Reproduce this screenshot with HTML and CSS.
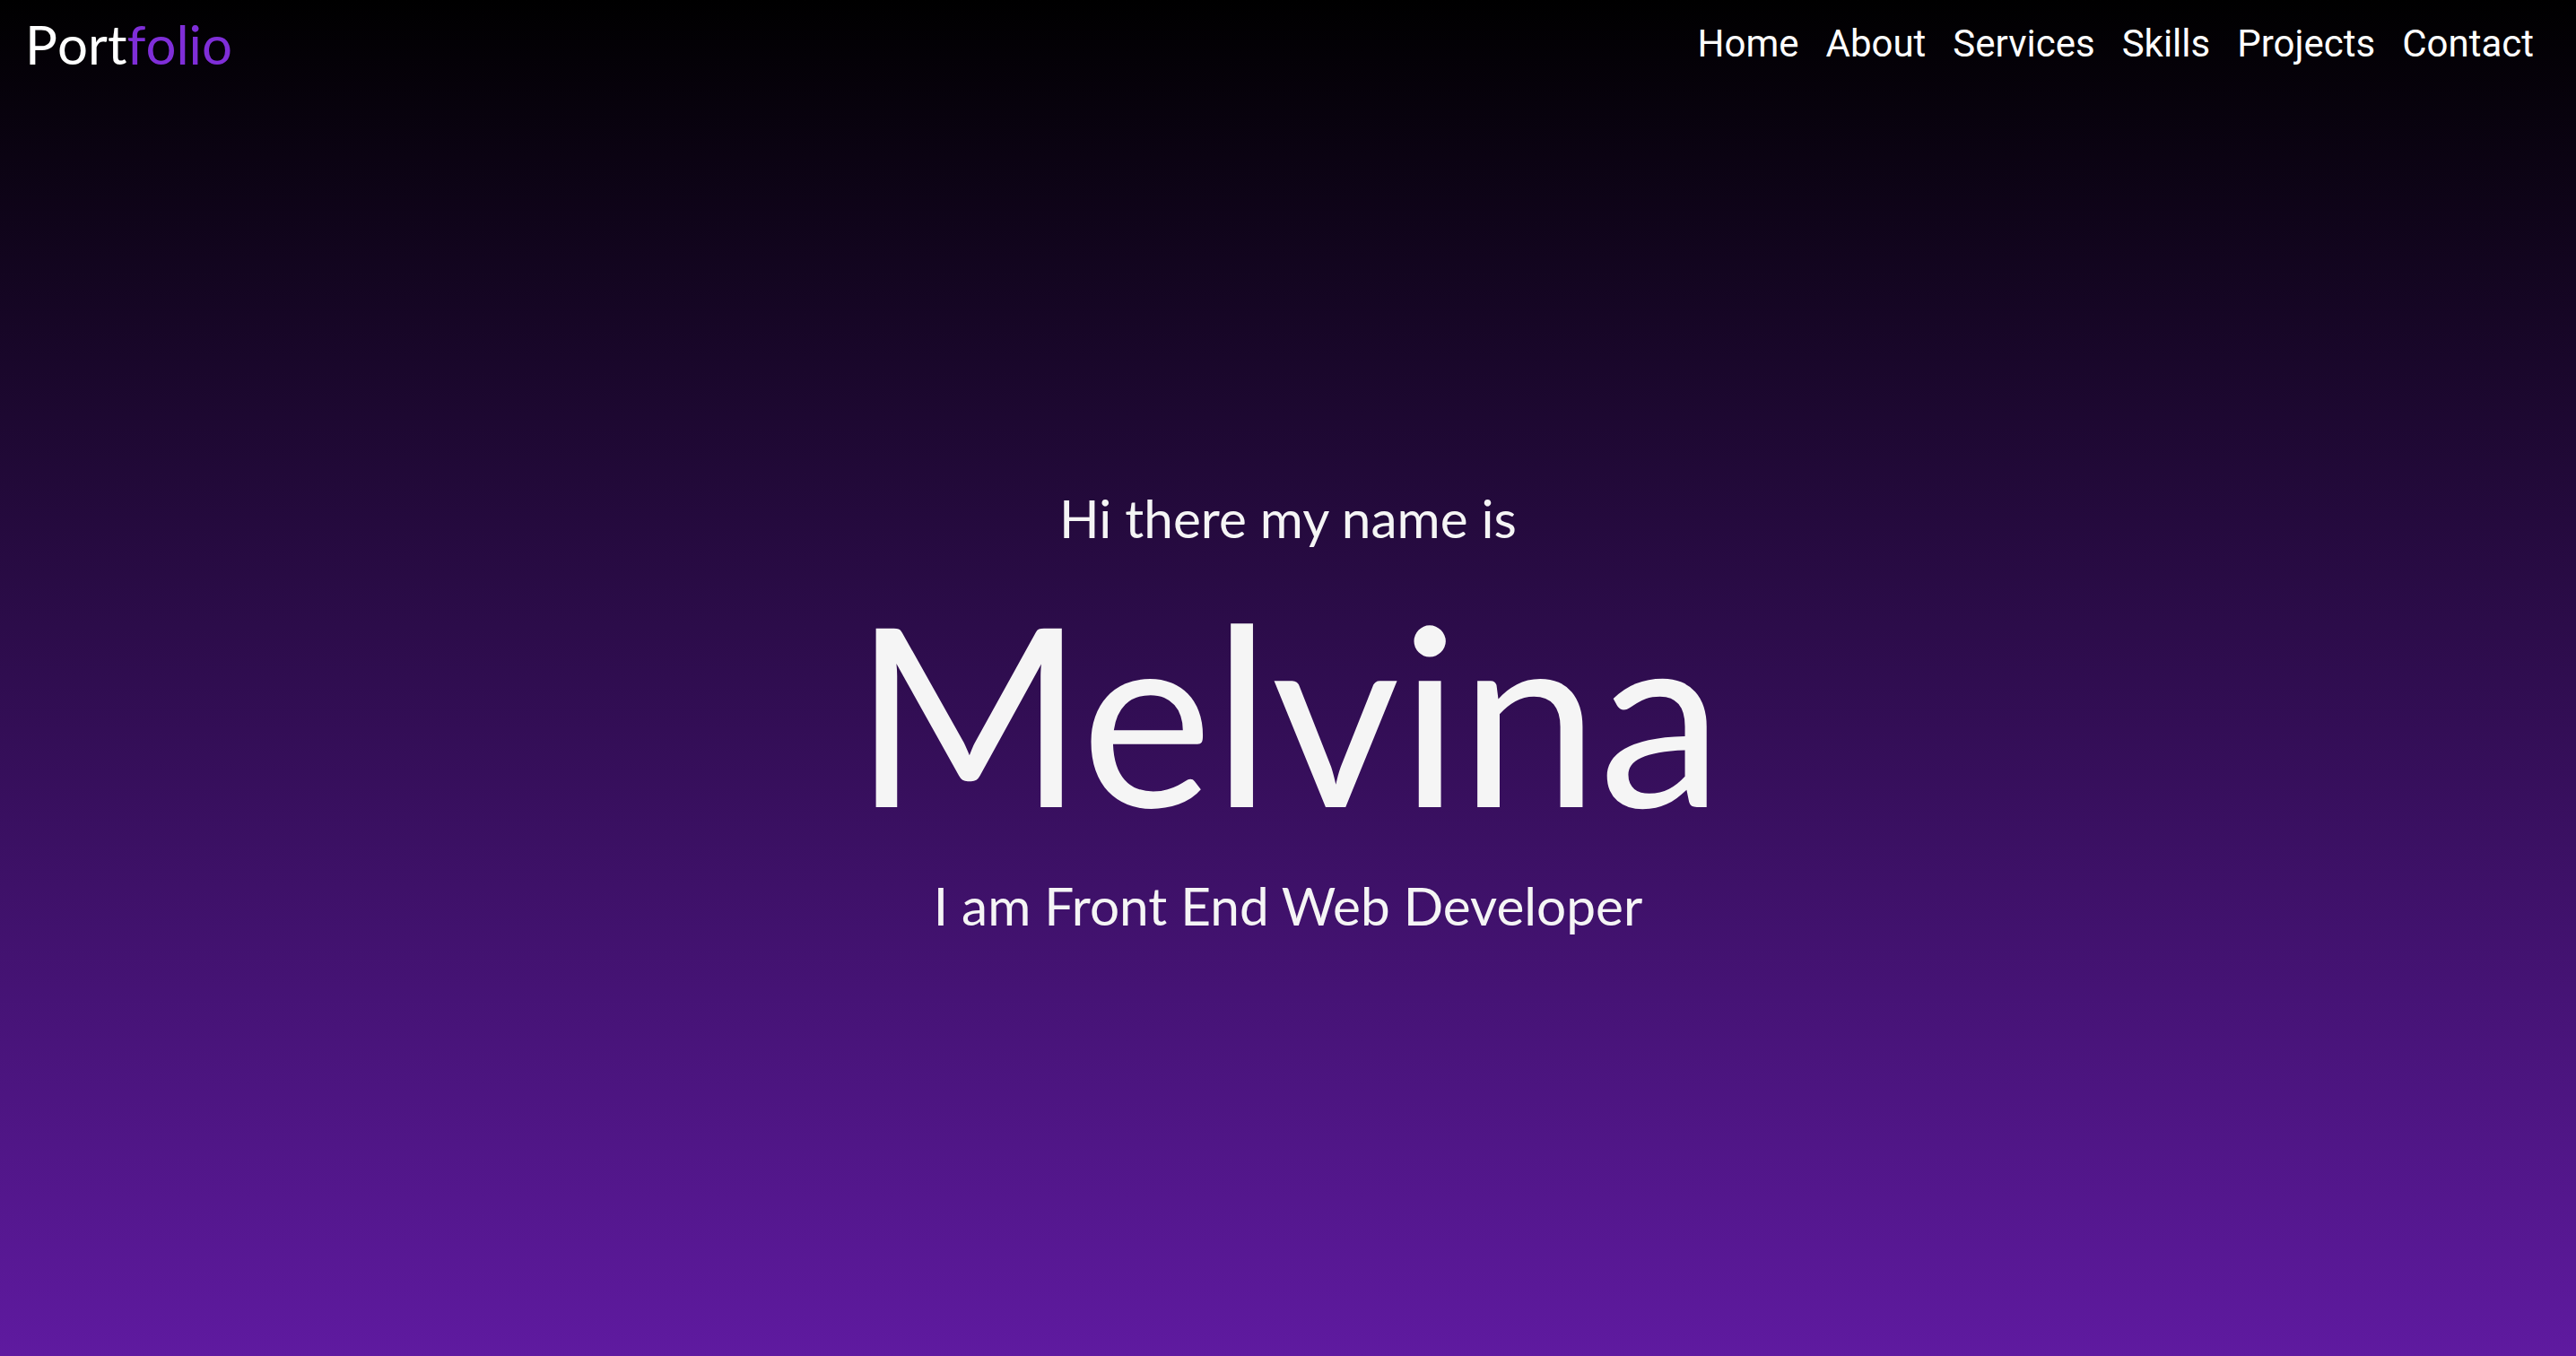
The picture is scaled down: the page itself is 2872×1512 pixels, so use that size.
FILE: index.html
```html
<!DOCTYPE html>
<html lang="en">
<head>
<meta charset="utf-8">
<title>Portfolio</title>
<link rel="stylesheet" href="styles.css">
</head>
<body>
<div class="page">
  <header class="header">
    <a class="logo" href="#">Port<span class="logo-accent">folio</span></a>
    <nav class="nav">
      <a href="#">Home</a>
      <a href="#">About</a>
      <a href="#">Services</a>
      <a href="#">Skills</a>
      <a href="#">Projects</a>
      <a href="#">Contact</a>
    </nav>
  </header>
  <main class="hero">
    <p class="hero-intro">Hi there my name is</p>
    <h1 class="hero-name">Melvina</h1>
    <p class="hero-role">I am Front End Web Developer</p>
  </main>
</div>
</body>
</html>
```

FILE: styles.css
```css
* { box-sizing: border-box; }
html, body { margin: 0; padding: 0; }
body {
  background: #5f1aa0;
  font-family: "Lato", "Liberation Sans", sans-serif;
  color: #f5f5f5;
}
.page {
  height: 100vh;
  display: flex;
  flex-direction: column;
  background: linear-gradient(to bottom, #000000 0%, #5f1aa0 100%);
  overflow: hidden;
}
.header {
  height: 74px;
  flex: 0 0 74px;
  display: flex;
  justify-content: space-between;
  align-items: flex-start;
  padding: 13px 47px 0 28px;
}
.logo {
  font-family: "Lato", sans-serif;
  font-size: 60px;
  line-height: 1.2;
  color: #ffffff;
  text-decoration: none;
  font-variant-ligatures: none;
  font-kerning: none;
}
.logo-accent { color: #7f2ed8; }
.nav {
  display: flex;
  gap: 30px;
  margin-top: 11px;
}
.nav a {
  font-family: "Roboto", sans-serif;
  font-size: 42px;
  line-height: 1.2;
  color: #ffffff;
  text-decoration: none;
}
.hero {
  flex: 1;
  display: flex;
  flex-direction: column;
  align-items: center;
  justify-content: center;
  text-align: center;
}
.hero-intro, .hero-role {
  margin: 0;
  font-size: 58.5px;
  line-height: 1.2;
}
.hero-name {
  margin: 42px 0;
  font-size: 278px;
  font-weight: 400;
  line-height: 1;
}
```
